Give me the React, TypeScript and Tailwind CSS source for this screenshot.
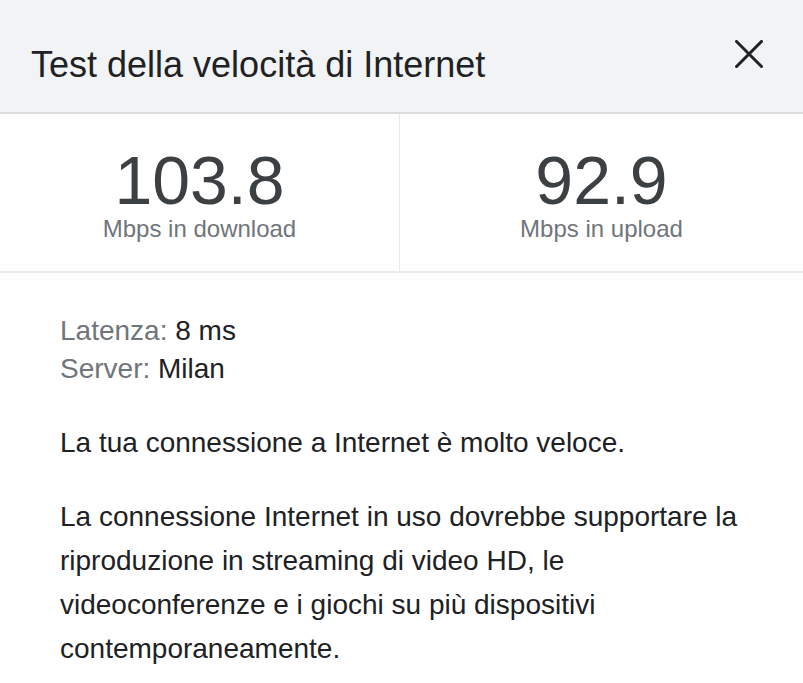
import React from "react";

export default function App() {
  const font = { fontFamily: '"Liberation Sans", Arial, sans-serif' };
  return (
    <div className="w-[803px] h-[683px] bg-white overflow-hidden" style={font}>
      <div className="h-[114px] bg-[#f1f3f4] border-b-2 border-[#dadce0] flex justify-between pl-[31px] pr-[40px]">
        <div className="mt-[47px] text-[36px] leading-[36px] text-[#202124]">
          Test della velocità di Internet
        </div>
        <svg className="mt-[40px]" width="28" height="28" viewBox="0 0 28 28">
          <path d="M1.5 1.5 L26.5 26.5 M26.5 1.5 L1.5 26.5" stroke="#202124" strokeWidth="3" strokeLinecap="square" fill="none" />
        </svg>
      </div>
      <div className="flex border-b-2 border-[#ebebeb]">
        <div className="w-[400px] border-r border-[#e8eaed] pt-[30px] pb-[29px] flex flex-col items-center">
          <div className="text-[68px] leading-[72px] text-[#3c4043]">103.8</div>
          <div className="text-[24px] leading-[26px] text-[#70757a]">Mbps in download</div>
        </div>
        <div className="flex-1 pt-[30px] pb-[29px] flex flex-col items-center">
          <div className="text-[68px] leading-[72px] text-[#3c4043]">92.9</div>
          <div className="text-[24px] leading-[26px] text-[#70757a]">Mbps in upload</div>
        </div>
      </div>
      <div className="pl-[60px] pr-[40px] pt-[39px] text-[28px] text-[#202124]">
        <div className="leading-[38px]">
          <span className="text-[#70757a]">Latenza:</span> 8 ms
        </div>
        <div className="leading-[38px]">
          <span className="text-[#70757a]">Server:</span> Milan
        </div>
        <p className="mt-[33px] leading-[44px]">La tua connessione a Internet è molto veloce.</p>
        <p className="mt-[30px] leading-[44px] w-[700px]">
          La connessione Internet in uso dovrebbe supportare la riproduzione in streaming di video HD, le videoconferenze e i giochi su più dispositivi contemporaneamente.
        </p>
      </div>
    </div>
  );
}
